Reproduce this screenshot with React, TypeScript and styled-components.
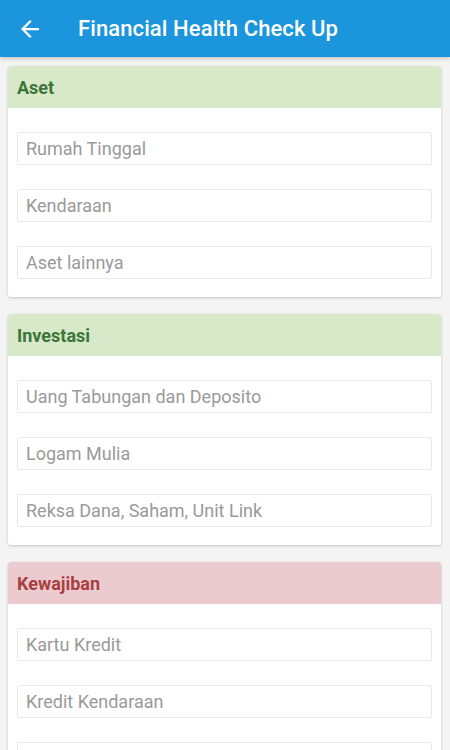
import React from "react";
import styled, { createGlobalStyle } from "styled-components";

const Global = createGlobalStyle`
  html, body { margin: 0; padding: 0; background: #f4f4f4; }
  body { font-family: Roboto, "Noto Sans", sans-serif; overflow: hidden; }
  * { box-sizing: border-box; }
`;

const Screen = styled.div`
  width: 450px;
  height: 750px;
  overflow: hidden;
  background: #f4f4f4;
  display: flex;
  flex-direction: column;
`;

const AppBar = styled.header`
  height: 57px;
  flex: none;
  background: #1b95db;
  display: flex;
  align-items: center;
  padding-left: 20px;
  box-shadow: 0 2px 4px rgba(0, 0, 0, 0.18);
  position: relative;
  z-index: 1;
`;

const BackButton = styled.button`
  width: 20px;
  height: 20px;
  padding: 0;
  border: 0;
  background: none;
  display: flex;
  align-items: center;
  justify-content: center;
  margin-right: 38px;
`;

const Title = styled.h1`
  margin: 0;
  color: #fff;
  font-size: 22px;
  font-weight: 500;
  letter-spacing: 0.1px;
`;

const Content = styled.main`
  display: flex;
  flex-direction: column;
  gap: 17px;
  padding: 9px 9px 0 8px;
`;

const Card = styled.section`
  background: #fff;
  border-radius: 3px;
  box-shadow: 0 1px 3px rgba(0, 0, 0, 0.2);
  overflow: hidden;
  flex: none;
`;

const CardHeader = styled.div<{ $tone: "success" | "danger" }>`
  height: 42px;
  display: flex;
  align-items: center;
  padding-left: 9px;
  background: ${(p) => (p.$tone === "success" ? "#d7e9c8" : "#ebcbd0")};
  color: ${(p) => (p.$tone === "success" ? "#3b753b" : "#a8403f")};
  font-size: 18px;
  font-weight: 700;
`;

const CardBody = styled.div`
  display: flex;
  flex-direction: column;
  gap: 24px;
  padding: 24px 9px 18px 9px;
`;

const Field = styled.input`
  height: 33px;
  width: 100%;
  border: 1px solid #e9e9e9;
  border-radius: 2px;
  padding: 0 8px;
  font-family: Roboto, "Noto Sans", sans-serif;
  font-size: 18px;
  color: #333;
  background: #fff;
  outline: none;
  &::placeholder { color: #9a9a9a; }
`;

const sections: { title: string; tone: "success" | "danger"; fields: string[] }[] = [
  { title: "Aset", tone: "success", fields: ["Rumah Tinggal", "Kendaraan", "Aset lainnya"] },
  {
    title: "Investasi",
    tone: "success",
    fields: ["Uang Tabungan dan Deposito", "Logam Mulia", "Reksa Dana, Saham, Unit Link"],
  },
  { title: "Kewajiban", tone: "danger", fields: ["Kartu Kredit", "Kredit Kendaraan", "Kredit Rumah"] },
];

export default function App() {
  return (
    <Screen>
      <Global />
      <AppBar>
        <BackButton aria-label="Kembali">
          <svg width="18" height="18" viewBox="0 0 16 16">
            <path d="M16 7H3.83l5.59-5.59L8 0 0 8l8 8 1.41-1.41L3.83 9H16z" fill="#fff" />
          </svg>
        </BackButton>
        <Title>Financial Health Check Up</Title>
      </AppBar>
      <Content>
        {sections.map((s) => (
          <Card key={s.title}>
            <CardHeader $tone={s.tone}>{s.title}</CardHeader>
            <CardBody>
              {s.fields.map((f) => (
                <Field key={f} placeholder={f} />
              ))}
            </CardBody>
          </Card>
        ))}
      </Content>
    </Screen>
  );
}
